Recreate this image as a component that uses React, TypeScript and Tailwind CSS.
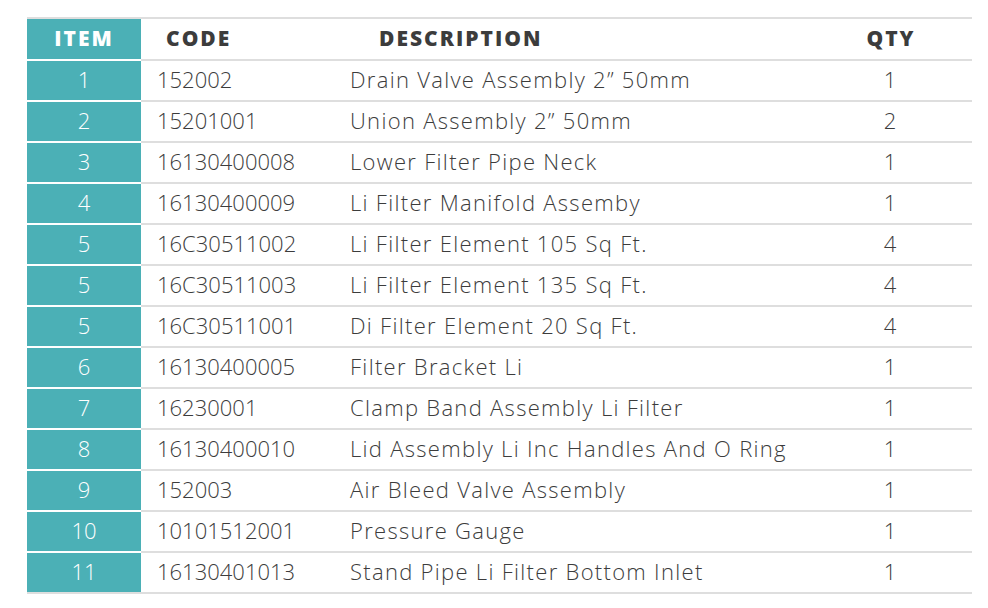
import React from "react";

const rows: [string, string, string, string][] = [
  ["1", "152002", "Drain Valve Assembly 2\u201d 50mm", "1"],
  ["2", "15201001", "Union Assembly 2\u201d 50mm", "2"],
  ["3", "16130400008", "Lower Filter Pipe Neck", "1"],
  ["4", "16130400009", "Li Filter Manifold Assemby", "1"],
  ["5", "16C30511002", "Li Filter Element 105 Sq Ft.", "4"],
  ["5", "16C30511003", "Li Filter Element 135 Sq Ft.", "4"],
  ["5", "16C30511001", "Di Filter Element 20 Sq Ft.", "4"],
  ["6", "16130400005", "Filter Bracket Li", "1"],
  ["7", "16230001", "Clamp Band Assembly Li Filter", "1"],
  ["8", "16130400010", "Lid Assembly Li Inc Handles And O Ring", "1"],
  ["9", "152003", "Air Bleed Valve Assembly", "1"],
  ["10", "10101512001", "Pressure Gauge", "1"],
  ["11", "16130401013", "Stand Pipe Li Filter Bottom Inlet", "1"],
];

export default function App() {
  return (
    <div className="w-[988px] h-[608px] bg-white pt-[17px] pl-[27px] font-['Open_Sans',sans-serif] text-[#3c3c3c]">
      <div className="w-[945px] border-t-2 border-b-2 border-[#dedede]">
        <div className="flex h-[40px] items-center font-extrabold text-[21px] tracking-[2px]">
          <div className="w-[114px] h-full bg-[#4bb0b6] text-white flex items-center justify-center">ITEM</div>
          <div className="w-[194px] pl-[25px]">CODE</div>
          <div className="w-[475px] pl-[44px]">DESCRIPTION</div>
          <div className="flex-1 text-center">QTY</div>
        </div>
        {rows.map((r, i) => (
          <div key={i} className="flex h-[41px] items-center text-[22px] font-light">
            <div className="w-[114px] h-full border-t-2 border-white bg-[#4bb0b6] text-white flex items-center justify-center pb-[3px]">
              {r[0]}
            </div>
            <div className="flex flex-1 h-full items-center border-t-2 border-[#dedede] pb-[3px]">
              <div className="w-[194px] pl-[16px]">{r[1]}</div>
              <div className="w-[475px] pl-[15px] tracking-[1.3px]">{r[2]}</div>
              <div className="flex-1 text-center pr-[2px]">{r[3]}</div>
            </div>
          </div>
        ))}
      </div>
    </div>
  );
}
